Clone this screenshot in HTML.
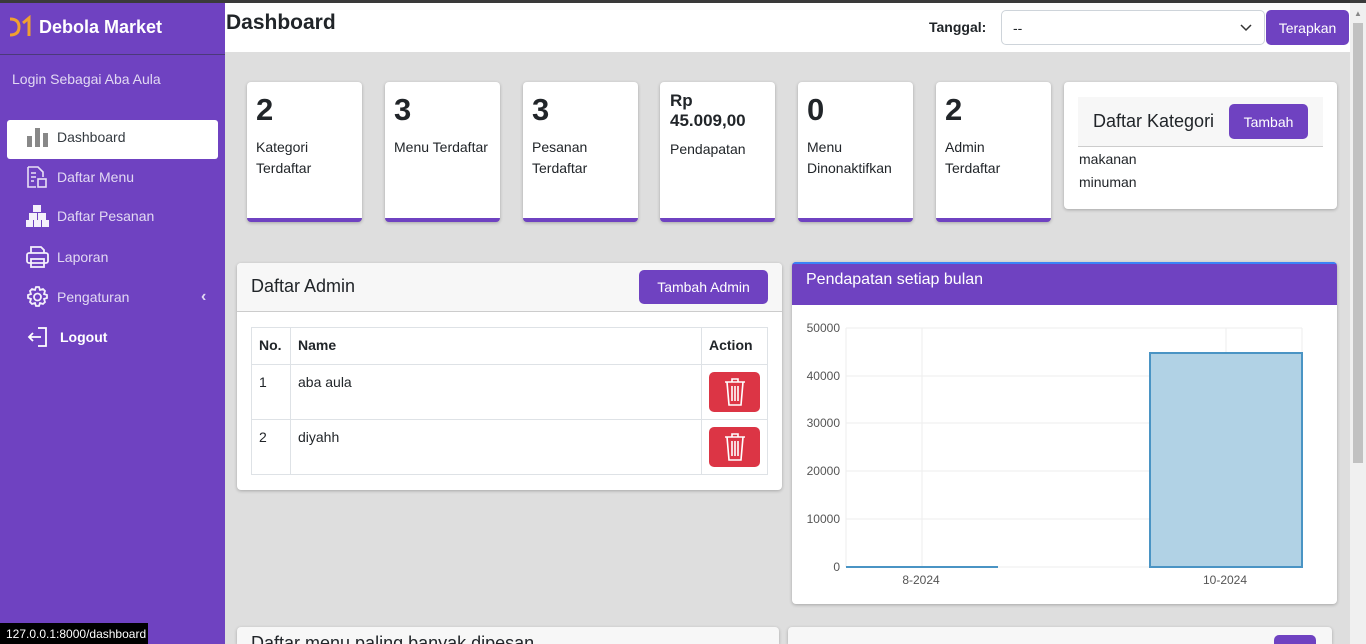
<!DOCTYPE html>
<html style="overflow:hidden;height:644px"><head><meta charset="utf-8"><style>
*{box-sizing:border-box;margin:0;padding:0}
body{width:1366px;height:644px;overflow:hidden;font-family:"Liberation Sans",sans-serif;background:#dedede;position:relative;color:#212529}
.abs{position:absolute}
#top{left:0;top:0;width:1366px;height:3px;background:#3a3a3a}
#side{left:0;top:3px;width:225px;height:641px;background:#6f42c1}
.nav{position:absolute;left:26px;color:#e2d9f3;font-size:14px;display:flex;align-items:center}
.nav svg{margin-right:8px}
#hdr{left:225px;top:3px;width:1125px;height:49px;background:#fff}
.card{position:absolute;background:#fff;border-radius:4px;box-shadow:0 1px 3px rgba(0,0,0,.25)}
.stat{top:82px;width:115px;height:140px;border-bottom:4px solid #6f42c1;padding:10px 9px}
.stat b{display:block;font-size:31px;font-weight:bold;margin-bottom:9px;margin-top:0}
.stat span{font-size:14px;line-height:21px}
.btn{position:absolute;background:#6f42c1;color:#fff;border-radius:5px;font-size:14px;display:flex;align-items:center;justify-content:center}
td,th{border:1px solid #dee2e6;font-size:14px;text-align:left;vertical-align:top;padding:9px 7px}
.del{width:51px;height:40px;background:#dc3545;border-radius:5px;display:flex;align-items:center;justify-content:center}
#sb{left:1350px;top:3px;width:16px;height:641px;background:#f0f0f0}
</style></head><body>
<div id="top" class="abs"></div>
<div id="side" class="abs">
 <div class="abs" style="left:8px;top:12px;display:flex;align-items:center">
  <svg width="26" height="24" viewBox="0 0 26 24"><path d="M2 4 Q11 4 11 12 Q11 20 2 20" stroke="#f0a030" stroke-width="3" fill="none"/><path d="M15 8 L21 3 L21 21" stroke="#f0a030" stroke-width="3" fill="none"/></svg>
  <span style="color:#fff;font-size:18px;font-weight:bold;margin-left:5px">Debola Market</span></div>
 <div class="abs" style="left:0;top:51px;width:225px;height:1px;background:#4b3a7a"></div>
 <div class="abs" style="left:12px;top:68px;color:#e2d9f3;font-size:14px">Login Sebagai Aba Aula</div>
 <div class="abs" style="left:7px;top:117px;width:211px;height:39px;background:#fff;border-radius:3px"></div>
 <div class="nav" style="top:123px;color:#343a40"><svg width="23" height="22"><rect x="1" y="10" width="5" height="11" fill="#888"/><rect x="9" y="2" width="5" height="19" fill="#888"/><rect x="17" y="7" width="5" height="14" fill="#888"/></svg>Dashboard</div>
 <div class="nav" style="top:162px"><svg width="23" height="24" fill="none" stroke="#e8e0f5" stroke-width="1.6"><path d="M2 2h10l5 5v5M2 2v20h8"/><path d="M5 8h5M5 12h5M5 16h3"/><rect x="12" y="14" width="8" height="8"/></svg>Daftar Menu</div>
 <div class="nav" style="top:201px"><svg width="23" height="24" fill="#f4f0fb"><rect x="7" y="1" width="8" height="7"/><rect x="3" y="9" width="8" height="7"/><rect x="12" y="9" width="8" height="7"/><rect x="0" y="16" width="7" height="7"/><rect x="8" y="16" width="7" height="7"/><rect x="16" y="16" width="7" height="7"/></svg>Daftar Pesanan</div>
 <div class="nav" style="top:242px"><svg width="23" height="24" fill="none" stroke="#f4f0fb" stroke-width="1.8"><path d="M5 8V2h10l3 3v3"/><rect x="1" y="8" width="21" height="10" rx="2"/><rect x="5" y="14" width="13" height="8"/></svg>Laporan</div>
 <div class="nav" style="top:282px"><svg width="23" height="24" fill="none" stroke="#f4f0fb" stroke-width="1.8"><circle cx="11.5" cy="12" r="3.5"/><path d="M10 2h3l1 3 3-1 2 2-1 3 3 1v3l-3 1 1 3-2 2-3-1-1 3h-3l-1-3-3 1-2-2 1-3-3-1v-3l3-1-1-3 2-2 3 1z"/></svg>Pengaturan<span style="position:absolute;left:175px;font-size:16px;font-weight:bold">&lsaquo;</span></div>
 <div class="nav" style="top:322px;color:#fff;font-weight:bold"><svg width="26" height="24" fill="none" stroke="#fff" stroke-width="1.8"><path d="M12 3h8v18h-8M15 12H3m4-4-4 4 4 4"/></svg>Logout</div>
</div>
<div id="hdr" class="abs">
 <div class="abs" style="left:1px;top:8px;font-size:21px;font-weight:bold">Dashboard</div>
 <div class="abs" style="left:704px;top:16px;font-size:14px;font-weight:bold">Tanggal:</div>
 <div class="abs" style="left:776px;top:7px;width:264px;height:35px;border:1px solid #ced4da;border-radius:5px;font-size:14px;padding:9px 11px">--<svg style="position:absolute;right:12px;top:13px" width="12" height="8" fill="none" stroke="#333" stroke-width="1.5"><path d="M1 1l5 5 5-5"/></svg></div>
</div>
<div class="btn" style="left:1266px;top:10px;width:83px;height:35px">Terapkan</div>
<div class="card stat" style="left:247px"><b>2</b><span>Kategori Terdaftar</span></div>
<div class="card stat" style="left:385px"><b>3</b><span>Menu Terdaftar</span></div>
<div class="card stat" style="left:523px"><b>3</b><span>Pesanan Terdaftar</span></div>
<div class="card stat" style="left:660px;padding-top:9px;padding-left:10px"><b style="font-size:17px;line-height:20px;margin-bottom:8px">Rp 45.009,00</b><span>Pendapatan</span></div>
<div class="card stat" style="left:798px"><b>0</b><span>Menu Dinonaktifkan</span></div>
<div class="card stat" style="left:936px"><b>2</b><span>Admin Terdaftar</span></div>
<div class="card" style="left:1064px;top:82px;width:273px;height:127px">
 <div class="abs" style="left:14px;top:15px;width:245px;height:50px;background:#f7f7f7;border-bottom:1px solid #ccc"></div>
 <div class="abs" style="left:29px;top:29px;font-size:18px">Daftar Kategori</div>
 <div class="btn" style="left:165px;top:22px;width:79px;height:35px">Tambah</div>
 <div class="abs" style="left:15px;top:66px;font-size:14px;line-height:23px">makanan<br>minuman</div>
</div>
<div class="card" style="left:237px;top:263px;width:545px;height:227px">
 <div class="abs" style="left:0;top:0;width:545px;height:49px;background:#f7f7f7;border-bottom:1px solid #ccc;border-radius:4px 4px 0 0"></div>
 <div class="abs" style="left:14px;top:13px;font-size:18px">Daftar Admin</div>
 <div class="btn" style="left:402px;top:7px;width:129px;height:34px">Tambah Admin</div>
 <table class="abs" style="left:14px;top:64px;width:517px;border-collapse:collapse">
  <tr style="height:37px"><th style="width:39px">No.</th><th>Name</th><th style="width:66px">Action</th></tr>
  <tr style="height:55px"><td>1</td><td>aba aula</td><td style="padding:7px 7px"><div class="del"><svg width="24" height="30" fill="none" stroke="#fff" stroke-width="1.6"><path d="M2 5h20M9 5V2h6v3M4 5l2 23h12l2-23M9 9v15M12 9v15M15 9v15"/></svg></div></td></tr>
  <tr style="height:55px"><td>2</td><td>diyahh</td><td style="padding:7px 7px"><div class="del"><svg width="24" height="30" fill="none" stroke="#fff" stroke-width="1.6"><path d="M2 5h20M9 5V2h6v3M4 5l2 23h12l2-23M9 9v15M12 9v15M15 9v15"/></svg></div></td></tr>
 </table>
</div>
<div class="card" style="left:792px;top:262px;width:545px;height:342px;overflow:hidden">
 <div class="abs" style="left:0;top:0;width:545px;height:43px;background:#6f42c1;border-top:2px solid #3b82f6"></div>
 <div class="abs" style="left:14px;top:9px;color:#fff;font-size:16px">Pendapatan setiap bulan</div>
 <svg class="abs" style="left:0;top:0" width="545" height="342" font-family="Liberation Sans" font-size="12" fill="#555">
  <g stroke="#eee" stroke-width="1">
   <line x1="54" y1="66" x2="510" y2="66"/><line x1="54" y1="114" x2="510" y2="114"/><line x1="54" y1="161" x2="510" y2="161"/><line x1="54" y1="209" x2="510" y2="209"/><line x1="54" y1="257" x2="510" y2="257"/><line x1="54" y1="305" x2="510" y2="305"/>
   <line x1="54" y1="66" x2="54" y2="305"/><line x1="130" y1="66" x2="130" y2="305"/><line x1="434" y1="66" x2="434" y2="305"/><line x1="510" y1="66" x2="510" y2="305"/>
  </g>
  <rect x="358" y="91" width="152" height="214" fill="#b1d2e5" stroke="#4a94c4" stroke-width="2"/>
  <line x1="54" y1="305" x2="206" y2="305" stroke="#4a94c4" stroke-width="2"/>
  <g text-anchor="end"><text x="48" y="70">50000</text><text x="48" y="118">40000</text><text x="48" y="165">30000</text><text x="48" y="213">20000</text><text x="48" y="261">10000</text><text x="48" y="309">0</text></g>
  <g text-anchor="middle"><text x="129" y="322">8-2024</text><text x="433" y="322">10-2024</text></g>
 </svg>
</div>
<div class="card" style="left:237px;top:627px;width:542px;height:17px;background:#f7f7f7;overflow:hidden;border-radius:4px 4px 0 0"><div class="abs" style="left:14px;top:6px;font-size:18px">Daftar menu paling banyak dipesan</div></div>
<div class="card" style="left:788px;top:627px;width:544px;height:17px;background:#f7f7f7;overflow:hidden;border-radius:4px 4px 0 0"><div class="btn" style="left:486px;top:8px;width:42px;height:30px"></div></div>
<div id="sb" class="abs"><div class="abs" style="left:3px;top:20px;width:10px;height:440px;background:#c1c1c1"></div><div class="abs" style="left:4px;top:6px;font-size:8px;color:#888">&#9650;</div></div>
<div class="abs" style="left:0;top:623px;width:148px;height:21px;background:#000;color:#fff;font-size:12px;padding:4px 6px">127.0.0.1:8000/dashboard</div>
</body></html>
